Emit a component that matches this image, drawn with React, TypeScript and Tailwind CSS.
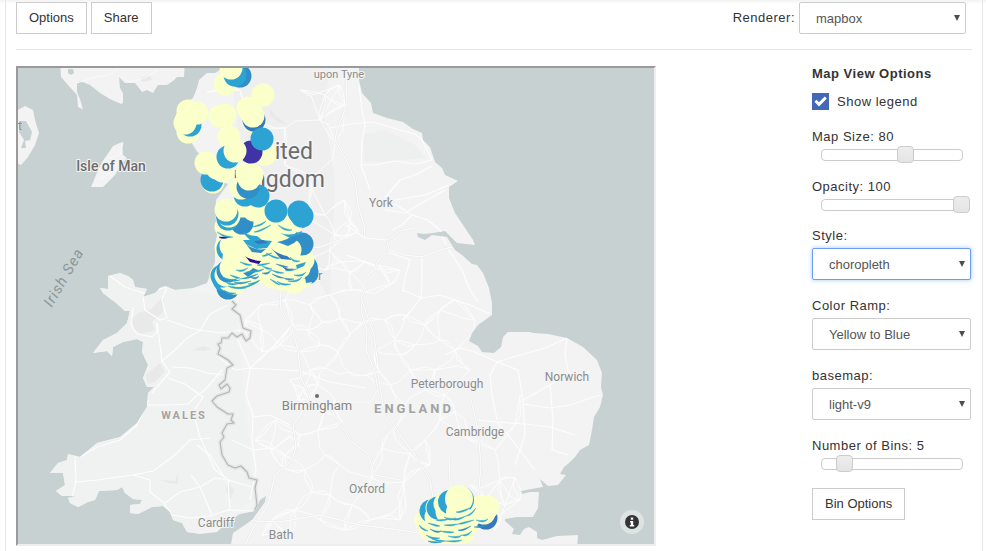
import { useState, type ReactNode } from "react";

type Point = [number, number];

const GREAT_BRITAIN =
  "M60 60 L61 77 68 85 77 95 78 107 83 109.500 80 99 77 92 77 83 80 81 90 85 100 93 110 99 121 104 123 103 123 93 120 88 119 77 125 83 135 83 142 92 147 90 153 93 158 85 167 85 173 81 177 77 184 77 185 60Z " +
  "M221 60 L220 70 215 73 207 73 199 80 197 88 193 98 180 108 175 118 178 130 190 140 196 150 200 155 202 165 215 180 228 184 222 192 216 200 215 215 218 230 215 245 215 262 207 283 193 288 175 290 165 286 160 288 155 293 143 297 147 289 135 287 133 280 128 276 120 273 108 276 108 289 100 288 103 293 112 300 115 302 125 311 130 311 127 323 117 333 103 340 93 353 107 351 112 356 113 347 123 342 137 339 143 342 142 352 148 365 143 378 147 387 154 387 148 393 147 407 137 423 120 437 97 443 80 457 68 454 67 460 58 463 50 473 63 473 65 485 56 491 62 496 76 496 68 498 70 503 78 507 88 502 95 500 99 491 117 490 122 487 125 493 133 499 142 500 140 504 130 505 130 513 138 514 152 507 163 506 170 512 173 520 182 523 187 532 200 534 217 532 230 520 240 514 255 511 260 500 266 496 265 502 257 513 252 520 233 533 230 550 " +
  "L577 550 578 535 557 536 542 540 537 538 537 532 529 527 524 529 520 535 512 534 514 529 505 521 505 519 517 517 533 517 538 508 539 492 530 492 522 494 521 491 537 488 543 487 540 479 548 486 558 485 566 475 560 474 564 467 569 463 575 457 580 450 589 445 592 430 594 417 600 407 603 395 601 387 602 373 597 360 583 347 567 338 548 334 533 333 530 332 508 332 503 337 501 347 494 353 482 352 478 346 469 341 472 333 478 325 492 315 492 303 489 288 483 273 477 265 472 264 462 255 455 250 447 237 432 235 425 240 418 237 417 233 423 234 433 233 445 231 457 243 475 245 473 240 455 213 449 198 449 187 458 181 445 175 442 168 435 162 430 147 423 140 422 133 413 129 403 122 387 118 373 113 371 103 362 93 359 80 359 60Z";

const IRELAND = "M10 112 L18 110 25 106 33 110 35 120 39 133 35 145 28 157 21 165 10 160Z";
const STRANGFORD = "M20 121 L26 121 32 132 30 140 25 141 26 148 21 148 24 140 19 132Z";
const ISLE_OF_MAN =
  "M122 142 L113 146 107 155 102 162 96 175 91 187 103 187 110 180 115 175 121 165 127 158 123 155Z";

const WELSH_BORDER =
  "M232 301 L236 305 232 309 240 315 243 328 251 331 250 338 246 341 242 334 237 337 232 333 228 338 222 338 221 343 218 344 220 348 218 354 228 360 233 365 227 368 225 380 219 385 221 389 227 384 230 388 229 392 217 396 212 401 217 407 228 414 233 414 231 420 234 423 227 424 222 433 224 437 220 442 222 455 228 465 235 468 241 466 247 472 249 478 257 480 255 488 257 505 255 510 258 512";

const ROADS = [
  "M167 287 L143 293 125 287 110 276",
  "M143 296 L145 310 160 320 167 318 162 300 167 287",
  "M133 308 L131 325 137 334 152 337 157 332 157 323",
  "M157 323 L160 345 162 361 170 372 163 380 152 393",
  "M167 320 L190 328 205 331 222 333 252 328",
  "M162 361 L175 350 187 338 200 331 210 314 228 305",
  "M172 367 L190 368 207 373 225 375",
  "M147 405 L170 405 188 404 195 397 205 390 222 370",
  "M168 378 L185 384 203 397 193 412 200 437 215 470 230 481",
  "M75 482 L97 480 133 475 153 471 175 455 190 440 210 438",
  "M75 455 L76 482 72 497",
  "M80 457 L97 447 120 440 137 425 149 400",
  "M133 475 L150 480 150 492 163 502 172 515 190 518 210 516 228 510 255 511",
  "M165 503 L180 492 200 487 215 478 228 480 252 487",
  "M228 480 L230 510",
  "M191 475 L200 487 212 515",
  "M197 445 L210 455 225 478",
  "M235 333 L250 368 275 345 292 325",
  "M250 368 L300 371 330 382 365 388",
  "M250 368 L246 395 253 415 252 440 256 470 250 500",
  "M217 355 L235 370 250 368",
  "M232 440 L253 450 275 448 290 436 300 447",
  "M253 417 L270 415 290 425",
  "M359 86 L362 110 365 125 362 143 361 165 370 190",
  "M330 128 L350 124 373 122 400 130 415 134 422 140 432 160",
  "M361 165 L375 165 395 161 415 164 432 160",
  "M385 198 L400 180 415 175 432 166",
  "M395 200 L425 195 449 185",
  "M385 210 L405 213 420 204 445 190",
  "M395 204 L412 215 402 225 392 230",
  "M412 215 L428 220 440 230 446 245",
  "M422 257 L422 280 421 298 440 295 470 305 490 314",
  "M403 290 L421 298 410 312 403 320",
  "M388 252 L410 260 405 278 403 292",
  "M346 225 L365 238 387 240",
  "M346 255 L375 265 378 270",
  "M449 250 L462 270 470 290 478 302",
  "M497 362 L520 355 545 348 567 338",
  "M497 362 L490 375 492 395 497 420",
  "M497 362 L518 370 523 400 525 435 515 465",
  "M497 362 L475 352 460 348 445 355",
  "M523 400 L550 385 567 375 585 380",
  "M567 338 L565 355 569 375 590 372",
  "M523 404 L550 408 570 405 600 395",
  "M497 422 L525 424 550 427 575 435",
  "M550 385 L553 420 552 450 568 455",
  "M478 420 L497 422 512 440 535 470",
];

const MOTORWAYS = [
  "M346 60 L347 105 337 130 335 140 345 158 355 180 358 205 364 225 365 237",
  "M387 240 L389 250 377 262 376 268 365 278 365 290 361 298",
  "M387 240 L400 231 415 228",
  "M389 250 L405 255 422 257 440 250 452 247",
  "M280 290 L281 310 292 328 298 350 301 378 310 397 302 412 293 425 296 447 292 460 275 475 268 505 255 525 245 545",
  "M361 298 L362 315 367 330 366 350 375 372 378 390 370 402 345 402 320 410",
  "M361 298 L374 335 378 365",
  "M330 408 L350 440 368 454 375 475 400 480",
  "M378 375 L383 405 400 435 415 455 430 480 433 497",
  "M471 400 L478 430 481 465 478 500 480 530",
  "M449 455 L450 485",
  "M230 520 L280 522 320 515 360 525 400 530 430 535",
  "M215 268 L250 256 285 250 320 247 345 238",
];

const TOWNS: Point[] = [
  [207, 92], [240, 90], [258, 122], [285, 128], [320, 120], [345, 105], [340, 85], [325, 95], [300, 90],
  [285, 165], [310, 180], [335, 142], [303, 215], [325, 215], [345, 200], [350, 220], [335, 235], [345, 238],
  [358, 232], [330, 250], [342, 262], [325, 270], [350, 272], [300, 265], [365, 262], [378, 265], [352, 290],
  [365, 292], [330, 295], [310, 305], [285, 300], [260, 305], [245, 320], [262, 330], [292, 325], [280, 345],
  [262, 352], [308, 330], [322, 322], [340, 318], [350, 335], [365, 322], [338, 352], [320, 345], [300, 352],
  [310, 370], [325, 368], [348, 372], [367, 375], [380, 372], [304, 388], [290, 380], [318, 385], [298, 400],
  [310, 400], [325, 412], [335, 400], [342, 422], [318, 430], [300, 435], [275, 420], [285, 455], [270, 448],
  [255, 440], [283, 468], [305, 470], [325, 455], [340, 465], [312, 492], [330, 495], [352, 505], [372, 478],
  [345, 530], [320, 520], [295, 510], [272, 520], [262, 535], [290, 535], [370, 520], [400, 505], [404, 482],
  [410, 454], [393, 430], [382, 448], [425, 440], [430, 465], [440, 420], [455, 412], [445, 395], [425, 390],
  [410, 370], [435, 370], [455, 350], [470, 370], [440, 340], [425, 325], [405, 315], [385, 320], [395, 340],
  [375, 350], [390, 385], [405, 405], [470, 440], [495, 450], [500, 480], [470, 485], [515, 478], [485, 500],
  [505, 505], [520, 500], [495, 530], [455, 300], [475, 320], [440, 310], [400, 355], [415, 345], [400, 520],
  [520, 395], [515, 425], [390, 285], [400, 270],
];

/* Joins each town to its nearest neighbours with a gently bent road. */
function minorRoads(): string {
  const parts: string[] = [];
  TOWNS.forEach(([x, y], index) => {
    const near = TOWNS.map(([tx, ty], other) => ({ tx, ty, other, d: Math.hypot(tx - x, ty - y) }))
      .filter((town) => town.other !== index && town.d < 46)
      .sort((a, b) => a.d - b.d)
      .slice(0, 3);
    near.forEach(({ tx, ty, other, d }) => {
      const bend = (((index * 7 + other * 13) % 9) - 4) * d * 0.04;
      const nx = (-(ty - y) / d) * bend;
      const ny = ((tx - x) / d) * bend;
      parts.push(
        `M${x} ${y} L${(x + (tx - x) / 3 + nx).toFixed(1)} ${(y + (ty - y) / 3 + ny).toFixed(1)} ` +
          `${(x + ((tx - x) * 2) / 3 + nx / 2).toFixed(1)} ${(y + ((ty - y) * 2) / 3 + ny / 2).toFixed(1)} ${tx} ${ty}`,
      );
    });
  });
  return parts.join(" ");
}

const HILLS = [
  "M270 108 L276 116 288 125 280 123 270 116Z",
  "M132 318 L140 312 150 310 160 300 164 296 163 312 152 322 155 330 142 334 134 330Z",
  "M193 350 L203 346 211 349 204 351Z",
  "M146 375 L160 363 165 372 155 382 148 384Z",
  "M160 480 L175 481 178 472 178 484 168 483Z",
  "M228 482 L234 490 230 500 226 490Z",
  "M140 78 L150 75 152 80 142 82Z",
  "M265 150 L280 148 285 155 272 158Z",
];

const RAMP = {
  y: "#fbffc9",
  t: "#2ca3d3",
  b: "#318ec7",
  d: "#3478bd",
  p: "#3f33a6",
  n: "#2f0b9c",
};
type Bin = keyof typeof RAMP;
type Marker = [Bin, number, number, number?];

const NORTH: Marker[] = [
  ["y", 225, 84], ["b", 240, 76], ["t", 235, 75], ["y", 231, 68],
  ["y", 263, 95], ["y", 254, 122], ["d", 254, 120], ["y", 253, 116], ["y", 248, 108], ["y", 250, 111],
  ["y", 188, 132], ["t", 190, 125], ["y", 185, 123], ["y", 197, 113], ["y", 187, 118], ["y", 188, 111],
  ["y", 220, 116], ["y", 225, 115], ["y", 229, 137],
  ["y", 213, 182], ["t", 212, 180], ["y", 206, 163], ["y", 217, 168], ["y", 223, 171],
  ["y", 250, 202], ["t", 258, 196], ["t", 245, 195], ["y", 241, 188],
  ["b", 248, 187], ["y", 247, 173], ["y", 249, 179], ["y", 252, 175],
  ["y", 265, 154], ["p", 251, 152], ["t", 262, 139], ["t", 228, 157], ["y", 235, 151],
];

/* Lancashire and Merseyside overlap into a solid block. */
const BLOCK: Marker[] = [
  ["y", 221, 276], ["y", 228, 289], ["b", 228, 288], ["y", 235, 283], ["t", 224, 280], ["y", 237, 281],
  ["y", 229, 280], ["t", 222, 276], ["y", 226, 275], ["y", 246, 277], ["y", 255, 272], ["y", 265, 272],
  ["y", 273, 277], ["y", 283, 279], ["y", 294, 282], ["b", 307, 273], ["y", 302, 277], ["b", 306, 267],
  ["y", 299, 268], ["b", 228, 271], ["y", 231, 268], ["y", 245, 268], ["y", 260, 262], ["y", 275, 264],
  ["y", 288, 268], ["y", 303, 260], ["y", 296, 258], ["y", 226, 248], ["t", 228, 249], ["y", 231, 246],
  ["y", 234, 258], ["y", 245, 254], ["y", 260, 250], ["y", 275, 252], ["y", 288, 254], ["y", 242, 240],
  ["y", 255, 238], ["y", 270, 238], ["y", 283, 240], ["b", 302, 244], ["y", 290, 250], ["y", 281, 230],
  ["y", 226, 227], ["t", 299, 217], ["y", 292, 222], ["t", 302, 216], ["t", 299, 212], ["y", 268, 224],
  ["y", 258, 222], ["b", 242, 223], ["y", 243, 206], ["y", 254, 210], ["t", 228, 219], ["y", 229, 216],
  ["t", 227, 214], ["y", 226, 210],
];

/* Darker areas left open between the overlapping points. */
const PATCHES: { bin: Bin; d: string }[] = [
  { bin: "t", d: "M240 229 Q247 236 257 236 L262 240 272 241 267 248 256 249 246 244 243 240 250 240 246 236Z" },
  { bin: "b", d: "M246 244 Q254 251 266 249 L261 253 252 252Z" },
  { bin: "d", d: "M254 241 L263 240 268 243 258 244Z" },
  { bin: "b", d: "M277 242 Q289 240 297 232 L302 236 294 243 288 246Z" },
  { bin: "t", d: "M280 233 Q291 237 302 231 L301 234 290 238Z" },
  { bin: "d", d: "M271 248 Q277 254 287 256 L292 260 281 259Z" },
  { bin: "n", d: "M245 256 Q250 260 261 261 L259 264 250 262Z" },
  { bin: "b", d: "M243 273 Q250 272 253 268 L258 270 248 277Z" },
  { bin: "b", d: "M305 277 Q314 275 317 264 L318 270 313 282 306 283Z" },
  { bin: "t", d: "M296 265 L306 262 304 266 297 269Z" },
];

const LONDON: Marker[] = [
  ["y", 426, 520], ["y", 430, 529], ["y", 440, 536], ["y", 455, 536], ["y", 463, 533], ["y", 468, 524],
  ["y", 445, 525], ["y", 455, 522], ["d", 486, 518], ["y", 484, 513], ["y", 477, 511], ["y", 488, 507],
  ["y", 480, 507], ["y", 470, 516], ["t", 431, 511], ["y", 437, 508], ["y", 436, 517], ["t", 438, 508],
  ["y", 445, 504], ["y", 447, 512], ["t", 450, 502, 12], ["t", 460, 500, 14], ["y", 458, 512, 12],
  ["y", 459, 499, 14],
];

type Sliver = [Bin, number, number, number, number];

/* bin, left edge, baseline, length, slope */
const SLIVERS: Sliver[] = [
  ["n", 219, 237, 11, 0], ["t", 217, 232, 16, 5], ["t", 252, 227, 14, -6], ["t", 254, 232, 17, -7],
  ["t", 240, 262, 12, 3], ["t", 266, 253, 14, 5], ["t", 262, 256, 10, -3], ["p", 283, 267, 10, 2],
  ["b", 276, 264, 12, 3], ["t", 290, 257, 10, 4], ["t", 271, 270, 13, 3], ["b", 262, 273, 9, -3],
  ["t", 285, 270, 12, -1], ["t", 222, 277, 18, 3], ["t", 230, 275, 10, 3], ["b", 234, 282, 17, -1],
  ["t", 240, 279, 18, -5], ["d", 250, 277, 9, -1], ["t", 228, 286, 18, 2], ["t", 237, 288, 22, -7],
  ["t", 270, 279, 10, 6], ["t", 277, 281, 14, 3], ["b", 272, 274, 12, 4], ["t", 288, 281, 14, -4],
  ["t", 257, 265, 13, -2], ["t", 278, 225, 14, 5], ["t", 246, 272, 18, -3], ["t", 224, 290, 12, 3],
  ["t", 262, 266, 10, 3], ["t", 294, 275, 12, -3], ["b", 284, 278, 10, 1], ["t", 236, 270, 12, -2],
  ["t", 248, 284, 12, -4], ["t", 226, 282, 14, 1],
];

const LONDON_SLIVERS: Sliver[] = [
  ["t", 436, 520, 14, -1], ["t", 444, 517, 12, 1], ["t", 428, 523, 12, 3], ["t", 452, 519, 14, -3],
  ["t", 444, 525, 14, -1], ["b", 430, 529, 11, 2], ["t", 458, 524, 16, -4], ["t", 426, 535, 14, 3],
  ["t", 440, 531, 14, 1], ["b", 458, 530, 13, -4], ["t", 432, 539, 14, 2], ["t", 448, 536, 14, -1],
  ["b", 428, 541, 14, 1], ["t", 462, 535, 10, -4], ["t", 446, 541, 16, -1], ["t", 456, 512, 16, -5],
  ["b", 474, 527, 14, -2], ["t", 476, 520, 12, -1], ["t", 419, 525, 9, 6], ["t", 466, 516, 10, -8],
];

function Markers({ points }: { points: Marker[] }) {
  return (
    <g>
      {points.map(([bin, x, y, radius = 11.5], index) => (
        <circle key={index} cx={x} cy={y} r={radius} fill={RAMP[bin]} />
      ))}
    </g>
  );
}

/* Each sliver is a thin crescent whose belly leans left or right in turn. */
function Slivers({ items }: { items: Sliver[] }) {
  return (
    <g>
      {items.map(([bin, x, y, length, slope], index) => {
        const lean = x + length * (0.3 + (index % 3) * 0.2);
        const depth = y + slope / 2 + (index % 2) * 2;
        return (
          <path
            key={index}
            d={`M${x} ${y} Q${lean} ${depth} ${x + length} ${y + slope} Q${lean} ${depth + 3} ${x} ${y}Z`}
            fill={RAMP[bin]}
            stroke={RAMP[bin]}
            strokeWidth="0.4"
          />
        );
      })}
    </g>
  );
}

function MapCanvas() {
  return (
    <svg
      viewBox="18 68 636 476"
      preserveAspectRatio="xMidYMid slice"
      className="block h-full w-full bg-[#c8d1d2] font-['Roboto',sans-serif]"
      role="img"
      aria-label="Map of England and Wales"
    >
      <defs>
        <clipPath id="land">
          <path d={GREAT_BRITAIN} />
        </clipPath>
      </defs>
      <g fill="#f2f3f2">
        <path d={GREAT_BRITAIN} />
        <path d={IRELAND} />
        <path d={ISLE_OF_MAN} />
      </g>
      <path d={STRANGFORD} fill="#c8d1d2" />
      <path d="M68 69h5l1 4-3 2-3-2z" fill="#c8d1d2" />
      <g clipPath="url(#land)" fill="none" strokeLinejoin="round">
        <path d="M100 270 L235 300 255 500 180 540 40 500z" fill="#f0f1f1" />
        <path d="M362 135 L385 130 415 145 425 158 400 160 365 162z" fill="#edf0ef" />
        <path d="M230 60 L330 60 325 120 335 180 330 300 300 250 270 200 240 150z" fill="#efefef" />
        {HILLS.map((hill) => (
          <path key={hill} d={hill} fill="#e8e9e8" />
        ))}
        <path d={minorRoads()} stroke="#fcfcfc" strokeWidth="1" />
        {ROADS.map((road) => (
          <path key={road} d={road} stroke="#fdfdfd" strokeWidth="1.2" />
        ))}
        {MOTORWAYS.map((road) => (
          <g key={road}>
            <path d={road} stroke="#e3e5e4" strokeWidth="2.2" />
            <path d={road} stroke="#fbfbfb" strokeWidth="1.4" />
          </g>
        ))}
        <path d={WELSH_BORDER} stroke="#e6e6e6" strokeWidth="4" />
        <path d={WELSH_BORDER} stroke="#b4b4b4" strokeWidth="1.1" />
      </g>
      <g fill="none" stroke="#fafafa">
        <path d="M77 83 L95 77 110 75 118 68 M119 76 L130 82 145 78 158 70 M123 142 L120 155 108 158 M100 180 L112 172 118 160" />
      </g>
      <circle cx="317" cy="396" r="2" fill="#6b6b6b" />
      <g stroke="#f4f5f5" strokeWidth="2" strokeLinejoin="round" paintOrder="stroke" textAnchor="middle">
        <g fill="#8c8c8c" fontSize="12">
          <text x="339" y="78" fontSize="11">upon Tyne</text>
          <text x="381" y="207">York</text>
          <text x="447" y="388">Peterborough</text>
          <text x="567" y="381">Norwich</text>
          <text x="475" y="436">Cambridge</text>
          <text x="367" y="493">Oxford</text>
          <text x="216" y="527">Cardiff</text>
          <text x="281" y="539">Bath</text>
        </g>
        <text x="317" y="410" fill="#858585" fontSize="13">Birmingham</text>
        <text x="288" y="280" fill="#858585" fontSize="13">Manchester</text>
        <text x="111" y="171" fill="#6c6c6c" fontSize="14" fontWeight="500">Isle of Man</text>
        <g fill="#6c6c6c" fontSize="23" strokeWidth="3">
          <text x="280" y="159">United</text>
          <text x="279" y="187">Kingdom</text>
        </g>
        <g fill="#a3a3a3" fontWeight="700">
          <text x="184" y="419" fontSize="11" className="tracking-[2px]">WALES</text>
          <text x="414" y="413" fontSize="13" className="tracking-[3px]">ENGLAND</text>
        </g>
      </g>
      <text
        transform="translate(68 280) rotate(-60)"
        textAnchor="middle"
        fill="#8b9798"
        fontSize="15"
        className="tracking-[1px] italic"
      >
        Irish Sea
      </text>
      <text x="18" y="130" fill="#8c8c8c" fontSize="12">t</text>
      <Markers points={BLOCK} />
      {PATCHES.map((patch) => (
        <path key={patch.d} d={patch.d} fill={RAMP[patch.bin]} />
      ))}
      <Slivers items={SLIVERS} />
      <Markers points={NORTH} />
      <Markers points={[["t", 276, 211]]} />
      <Markers points={LONDON} />
      <Slivers items={LONDON_SLIVERS} />
      <circle cx="632" cy="522" r="12" fill="#dde2e3" />
      <circle cx="632" cy="522" r="7" fill="#333333" />
      <path d="M630.800 517.500h2.400v2.200h-2.400z M630 521h3.200v4h1v1.400h-4.400v-1.400h1v-2.600h-.8z" fill="#ffffff" />
    </svg>
  );
}

function PlainButton({ children }: { children: ReactNode }) {
  return (
    <button type="button" className="h-8 border border-[#cccccc] bg-white px-3 text-[13px] leading-4 text-[#333333]">
      {children}
    </button>
  );
}

interface PickerProps {
  id: string;
  options: string[];
  active?: boolean;
}

function Picker({ id, options, active = false }: PickerProps) {
  const look = active ? "border-[#6a9cf0] shadow-[0_0_5px_#a9c8fa]" : "border-[#cccccc]";
  return (
    <div className="relative w-full">
      <select
        id={id}
        className={`block h-8 w-full appearance-none rounded-xs border bg-white pt-[2px] pr-6 pl-4 text-[13px] leading-4 text-[#555555] outline-none ${look}`}
      >
        {options.map((option) => (
          <option key={option}>{option}</option>
        ))}
      </select>
      <svg viewBox="0 0 6 6" className="pointer-events-none absolute top-[13px] right-[6px] size-[6px]" aria-hidden="true">
        <path d="M0 0h6L3 6z" fill="#4d4d4d" />
      </svg>
    </div>
  );
}

interface SliderProps {
  id: string;
  label: string;
  min: number;
  max: number;
  initial: number;
}

function Slider({ id, label, min, max, initial }: SliderProps) {
  const [value, setValue] = useState(initial);
  return (
    <div className="flex flex-col gap-px">
      <label htmlFor={id}>
        {label}: {value}
      </label>
      <div className="grid items-center px-px">
        <div className="col-start-1 row-start-1 ml-2 mr-[7px] h-3 rounded border border-[#cccccc] bg-white" />
        <input
          id={id}
          type="range"
          min={min}
          max={max}
          value={value}
          onChange={(event) => setValue(Number(event.target.value))}
          className="col-start-1 row-start-1 h-[17px] w-full appearance-none bg-transparent [&::-webkit-slider-thumb]:size-[17px] [&::-webkit-slider-thumb]:appearance-none [&::-webkit-slider-thumb]:rounded [&::-webkit-slider-thumb]:border [&::-webkit-slider-thumb]:border-[#cccccc] [&::-webkit-slider-thumb]:bg-linear-to-b [&::-webkit-slider-thumb]:from-[#ededed] [&::-webkit-slider-thumb]:to-[#e4e4e4]"
        />
      </div>
    </div>
  );
}

export default function App() {
  return (
    <div className="min-h-screen bg-white bg-linear-to-b from-[#f3f3f3] to-white bg-size-[100%_4px] bg-no-repeat pr-[3px] pl-[5px] font-['Liberation_Sans',Arial,sans-serif] text-[13px] leading-4 text-[#333333]">
      <div className="min-h-screen border-x border-[#e7e7e7] px-[10px] pt-[2px]">
        <header className="flex items-start justify-between border-b border-[#e7e7e7] pb-[15px]">
          <div className="flex gap-1">
            <PlainButton>Options</PlainButton>
            <PlainButton>Share</PlainButton>
          </div>
          <div className="flex items-center gap-1 pr-[6px]">
            <label htmlFor="renderer" className="tracking-[0.5px]">
              Renderer:
            </label>
            <div className="w-[167px]">
              <Picker id="renderer" options={["mapbox", "leaflet"]} />
            </div>
          </div>
        </header>

        <main className="flex items-start justify-between gap-8 pt-4">
          <div className="aspect-4/3 max-w-[640px] flex-1 border-2 border-t-[#9a9a9a] border-r-[#eeeeee] border-b-[#eeeeee] border-l-[#9a9a9a]">
            <MapCanvas />
          </div>

          <aside className="w-40 shrink-0 pr-px">
            <h2 className="font-bold tracking-[0.5px]">Map View Options</h2>
            <label className="mt-[11px] flex items-center gap-2 tracking-[0.5px]">
              <span className="grid">
                <input
                  type="checkbox"
                  defaultChecked
                  className="peer col-start-1 row-start-1 size-[17px] appearance-none border border-[#4467b8] checked:bg-[#4467b8]"
                />
                <svg
                  viewBox="0 0 17 17"
                  className="pointer-events-none invisible col-start-1 row-start-1 size-[17px] peer-checked:visible"
                  aria-hidden="true"
                >
                  <path d="M3.500 7.800l3.500 3.500 6.800-6.800" fill="none" stroke="#ffffff" strokeWidth="3" />
                </svg>
              </span>
              Show legend
            </label>

            <div className="mt-[19px] flex flex-col gap-4 tracking-[0.5px]">
              <Slider id="map-size" label="Map Size" min={50} max={100} initial={80} />
              <Slider id="opacity" label="Opacity" min={0} max={100} initial={100} />
            </div>

            <div className="mt-[15px] flex flex-col gap-[18px]">
              <div className="flex flex-col gap-1">
                <label htmlFor="style" className="tracking-[0.5px]">
                  Style:
                </label>
                <Picker id="style" options={["choropleth", "heatmap"]} active />
              </div>
              <div className="flex flex-col gap-1">
                <label htmlFor="ramp" className="tracking-[0.5px]">
                  Color Ramp:
                </label>
                <Picker id="ramp" options={["Yellow to Blue", "Blue to Red"]} />
              </div>
              <div className="flex flex-col gap-1">
                <label htmlFor="basemap" className="tracking-[0.5px]">
                  basemap:
                </label>
                <Picker id="basemap" options={["light-v9", "dark-v9"]} />
              </div>
              <div className="tracking-[0.5px]">
                <Slider id="bins" label="Number of Bins" min={3} max={15} initial={5} />
              </div>
            </div>

            <div className="mt-4">
              <PlainButton>Bin Options</PlainButton>
            </div>
          </aside>
        </main>
      </div>
    </div>
  );
}
